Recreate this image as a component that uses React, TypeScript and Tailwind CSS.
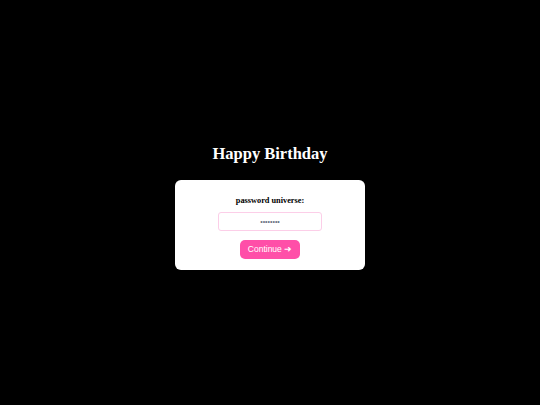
export default function App() {
  return (
    <div className="flex h-[405px] w-[540px] flex-col items-center justify-center bg-black pt-[9px]">
      <h1 className="font-['Liberation_Serif',serif] text-[16.5px] font-bold leading-[20px] text-white">
        Happy Birthday
      </h1>
      <div className="mt-[16px] flex h-[90px] w-[190px] flex-col items-center rounded-[6px] bg-white pt-[16px]">
        <p className="font-['Liberation_Serif',serif] text-[8.3px] font-bold leading-[10px] text-black">
          password universe:
        </p>
        <input
          type="password"
          placeholder="••••••••"
          className="mt-[6px] h-[19px] w-[104px] rounded-[3px] border border-pink-200 bg-white text-center font-['Liberation_Sans',sans-serif] text-[7px] text-gray-600 outline-none placeholder:text-gray-500"
        />
        <button
          type="button"
          className="mt-[9px] h-[19px] w-[60px] rounded-[5px] bg-[#ff4fa8] font-['Liberation_Sans',sans-serif] text-[8.5px] text-white"
        >
          Continue ➜
        </button>
      </div>
    </div>
  );
}
